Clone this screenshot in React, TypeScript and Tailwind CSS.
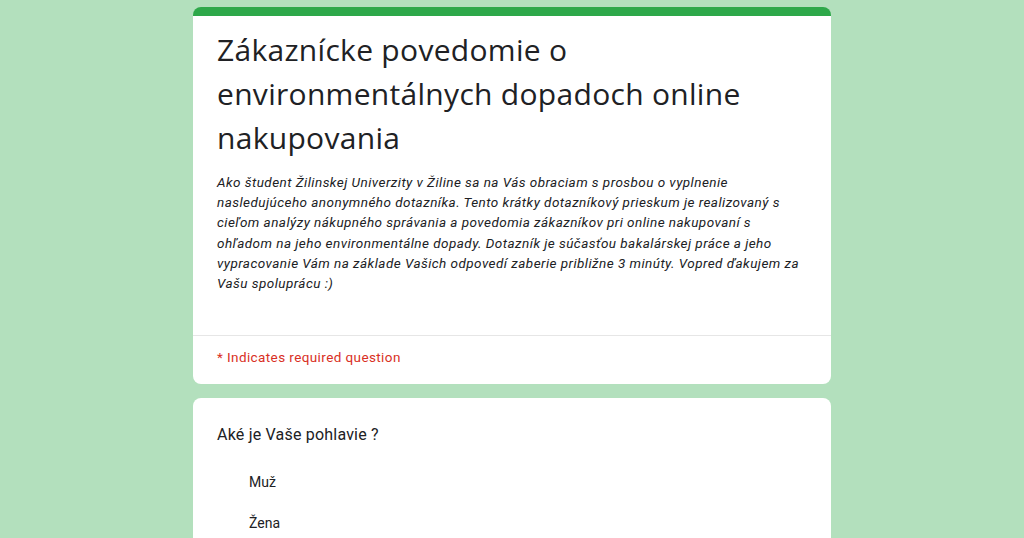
const lines = [
  "Ako študent Žilinskej Univerzity v Žiline sa na Vás obraciam s prosbou o vyplnenie",
  "nasledujúceho anonymného dotazníka. Tento krátky dotazníkový prieskum je realizovaný s",
  "cieľom analýzy nákupného správania a povedomia zákazníkov pri online nakupovaní s",
  "ohľadom na jeho environmentálne dopady. Dotazník je súčasťou bakalárskej práce a jeho",
  "vypracovanie Vám na základe Vašich odpovedí zaberie približne 3 minúty. Vopred ďakujem za",
  "Vašu spoluprácu :)",
];

export default function App() {
  return (
    <div className="h-[538px] w-full overflow-hidden bg-[#b3e0bd] pt-[7px]">
      <div className="mx-auto flex w-[638px] flex-col gap-[14px]">
        <div className="overflow-hidden rounded-lg border-t-[9px] border-[#2ea84a] bg-white">
          <div className="px-6 pt-[12px] pb-[42px]">
            <h1 className="font-['Open_Sans',sans-serif] text-[30px] leading-[44px] tracking-[0.3px] text-[#202124]">
              Zákaznícke povedomie o environmentálnych dopadoch online nakupovania
            </h1>
            <p className="mt-[12px] font-['Roboto',sans-serif] text-[13.5px] italic leading-[20.2px] tracking-[0.45px] whitespace-nowrap text-[#202124]">
              {lines.map((l, i) => (
                <span key={i} className="block">
                  {l}
                </span>
              ))}
            </p>
          </div>
          <div className="border-t border-[#e6e6e6] px-6 pt-[11px] pb-[17px]">
            <p className="font-['Roboto',sans-serif] text-[13.5px] tracking-[0.4px] text-[#d93025]">
              * Indicates required question
            </p>
          </div>
        </div>
        <div className="rounded-lg bg-white px-6 pt-[25px] pb-6">
          <p className="font-['Roboto',sans-serif] text-[16px] tracking-[0.2px] text-[#202124]">Aké je Vaše pohlavie ?</p>
          <div className="mt-[25px] flex flex-col gap-[20px] pl-8">
            <span className="font-['Roboto',sans-serif] text-[14px] text-[#202124]">Muž</span>
            <span className="font-['Roboto',sans-serif] text-[14px] text-[#202124]">Žena</span>
          </div>
        </div>
      </div>
    </div>
  );
}
